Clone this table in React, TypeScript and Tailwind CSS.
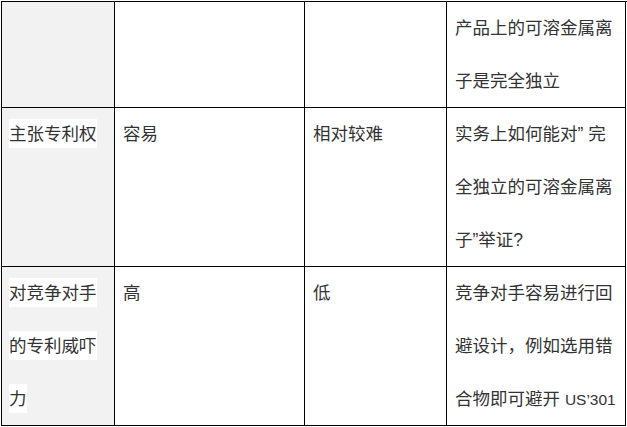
const font = { fontFamily: '"Liberation Sans", "Noto Sans CJK SC", sans-serif' };

function Hl({ children }: { children: React.ReactNode }) {
  // white highlight behind first-column text
  return <span className="bg-white pt-[5px] pb-[4px]">{children}</span>;
}

export default function App() {
  return (
    <div className="w-[627px] h-[427px] bg-white pl-[1px] pt-[1px]" style={font}>
      <div className="grid grid-cols-[113px_190px_142px_179px] grid-rows-[106px_159px_159px] border-l border-t border-black text-[17.5px] leading-[53px] text-[#333333] whitespace-nowrap">
        {/* row 1 */}
        <div className="bg-[#f2f2f2] border-r border-b border-black pl-[7px]" />
        <div className="border-r border-b border-black pl-2" />
        <div className="border-r border-b border-black pl-2" />
        <div className="border-r border-b border-black pl-2">
          产品上的可溶金属离
          <br />
          子是完全独立
        </div>

        {/* row 2 */}
        <div className="bg-[#f2f2f2] border-r border-b border-black pl-[7px]">
          <Hl>主张专利权</Hl>
        </div>
        <div className="border-r border-b border-black pl-2">容易</div>
        <div className="border-r border-b border-black pl-2">相对较难</div>
        <div className="border-r border-b border-black pl-2">
          实务上如何能对” 完
          <br />
          全独立的可溶金属离
          <br />
          子”举证?
        </div>

        {/* row 3 */}
        <div className="bg-[#f2f2f2] border-r border-b border-black pl-[7px]">
          <Hl>对竞争对手</Hl>
          <br />
          <Hl>的专利威吓</Hl>
          <br />
          <Hl>力</Hl>
        </div>
        <div className="border-r border-b border-black pl-2">高</div>
        <div className="border-r border-b border-black pl-2">低</div>
        <div className="border-r border-b border-black pl-2">
          竞争对手容易进行回
          <br />
          避设计，例如选用错
          <br />
          合物即可避开 <span className="text-[15.5px]">US’301</span>
        </div>
      </div>
    </div>
  );
}
